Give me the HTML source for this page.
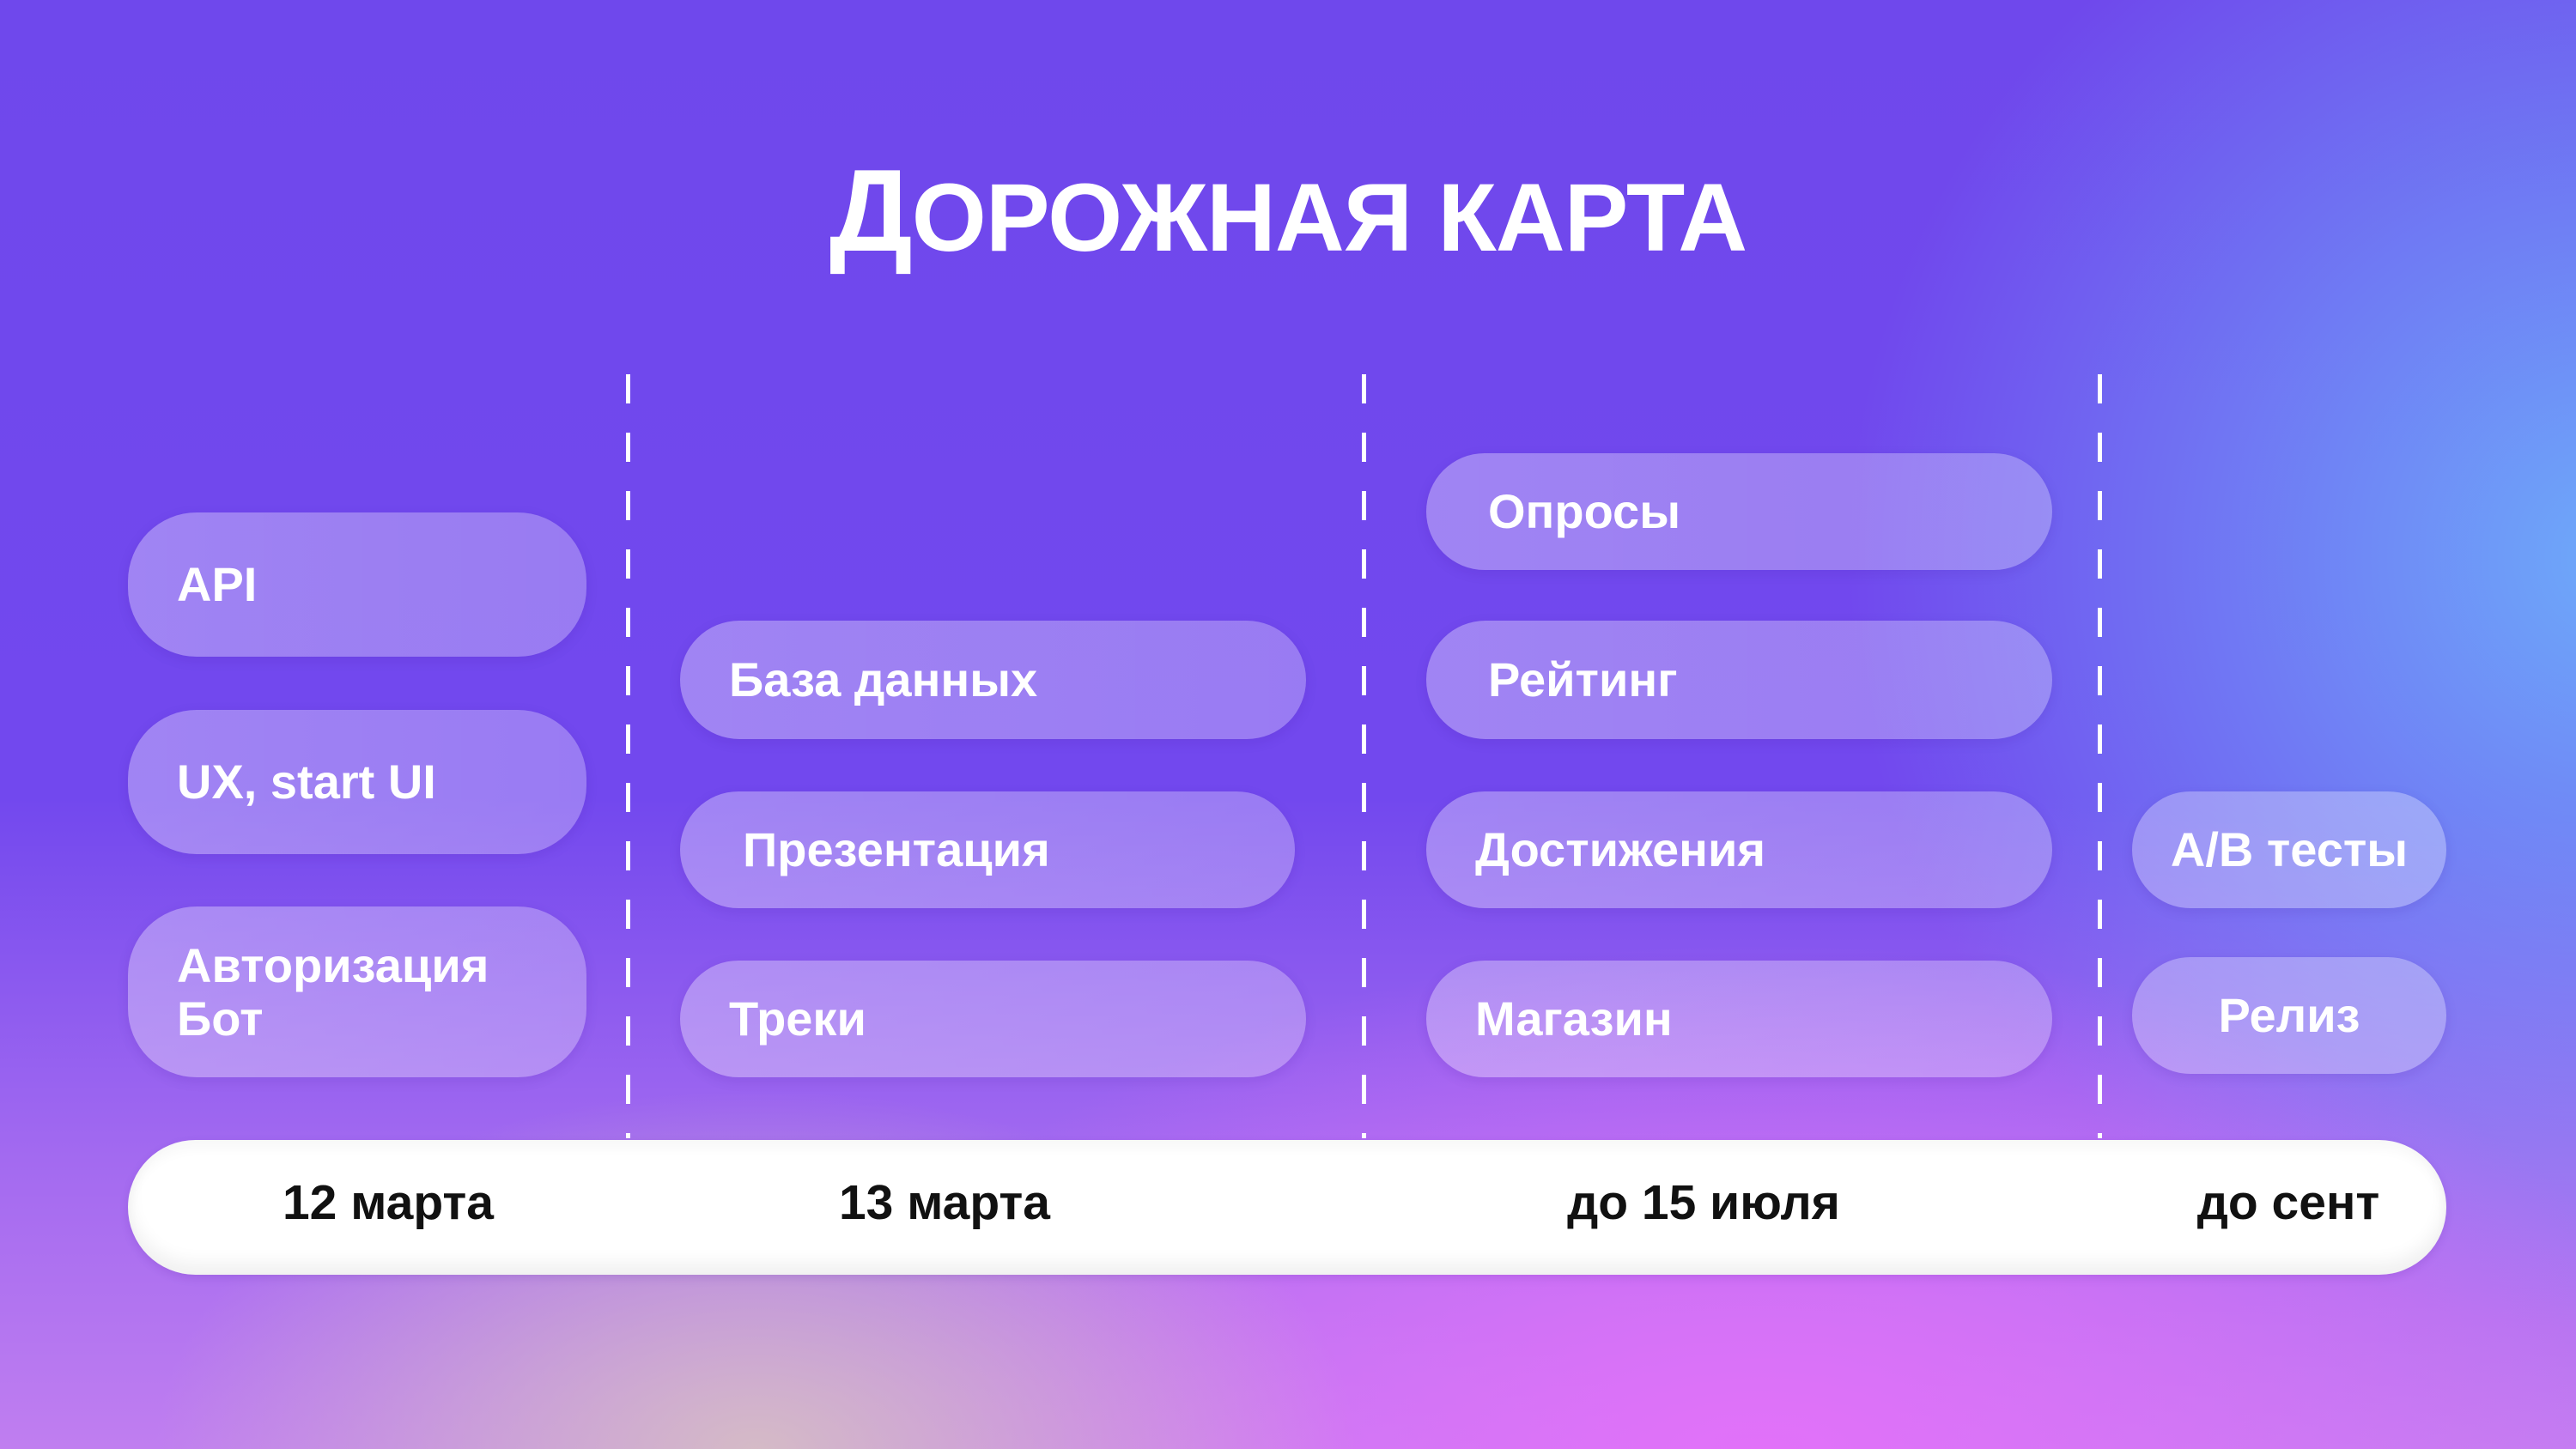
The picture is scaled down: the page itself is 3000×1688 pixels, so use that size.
<!DOCTYPE html>
<html><head><meta charset="utf-8"><style>
html,body{margin:0;padding:0}
body{width:3000px;height:1688px;position:relative;overflow:hidden;font-family:"Liberation Sans","DejaVu Sans",sans-serif;
background:
radial-gradient(ellipse 700px 420px at 880px 1690px,rgba(214,190,196,0.95),rgba(214,190,196,0) 100%),
radial-gradient(ellipse 1100px 600px at 2050px 1700px,rgba(228,112,250,0.95),rgba(228,112,250,0) 100%),
radial-gradient(ellipse 900px 900px at 3050px 650px,rgba(110,170,250,1),rgba(110,170,250,0) 100%),
linear-gradient(180deg,#6f48ec 0%,#7248ee 55%,#a36af0 80%,#c07ef0 100%);}
.t{position:absolute;left:0;width:3000px;top:313px;height:0;text-align:center;color:#fff;font-weight:bold;white-space:nowrap}
.t span{position:absolute;left:0;width:3000px;bottom:0;text-align:center;font-size:112px;line-height:1;letter-spacing:-1px}
.t b{font-size:136px}
.d{position:absolute;top:436px;height:890px;width:5px;background:repeating-linear-gradient(180deg,#fff 0 34px,transparent 34px 68px)}
.p{position:absolute;border-radius:80px;background:linear-gradient(90deg,rgba(255,255,255,0.33),rgba(255,255,255,0.28));box-shadow:0 4px 14px rgba(60,20,150,0.12);color:#fff;font-weight:bold;font-size:56px;display:flex;align-items:center;padding-left:57px;box-sizing:border-box;line-height:62px}
.bar{position:absolute;left:149px;top:1328px;width:2700px;height:157px;border-radius:80px;background:#fff;box-shadow:inset 0 -14px 20px rgba(0,0,0,0.06),inset 0 10px 14px rgba(0,0,0,0.03),0 4px 10px rgba(80,30,160,0.15)}
.l{position:absolute;top:1368px;font-weight:bold;font-size:57px;color:#111;transform:translateX(-50%);white-space:nowrap}
</style></head><body>
<div class="t"><span><b>Д</b>ОРОЖНАЯ КАРТА</span></div>
<div class="d" style="left:729px"></div>
<div class="d" style="left:1586px"></div>
<div class="d" style="left:2443px"></div>

<div class="p" style="left:149px;top:597px;width:534px;height:168px">API</div>
<div class="p" style="left:149px;top:827px;width:534px;height:168px">UX, start UI</div>
<div class="p" style="left:149px;top:1056px;width:534px;height:199px">Авторизация<br>Бот</div>

<div class="p" style="left:792px;top:723px;width:729px;height:138px">База данных</div>
<div class="p" style="left:792px;top:922px;width:716px;height:136px;padding-left:73px">Презентация</div>
<div class="p" style="left:792px;top:1119px;width:729px;height:136px">Треки</div>

<div class="p" style="left:1661px;top:528px;width:729px;height:136px;padding-left:72px">Опросы</div>
<div class="p" style="left:1661px;top:723px;width:729px;height:138px;padding-left:72px">Рейтинг</div>
<div class="p" style="left:1661px;top:922px;width:729px;height:136px">Достижения</div>
<div class="p" style="left:1661px;top:1119px;width:729px;height:136px">Магазин</div>

<div class="p" style="left:2483px;top:922px;width:366px;height:136px;padding-left:0;justify-content:center;background:rgba(255,255,255,0.3)">A/B тесты</div>
<div class="p" style="left:2483px;top:1115px;width:366px;height:136px;padding-left:0;justify-content:center;background:rgba(255,255,255,0.3)">Релиз</div>

<div class="bar"></div>
<div class="l" style="left:452px">12 марта</div>
<div class="l" style="left:1100px">13 марта</div>
<div class="l" style="left:1984px">до 15 июля</div>
<div class="l" style="left:2665px">до сент</div>
</body></html>
